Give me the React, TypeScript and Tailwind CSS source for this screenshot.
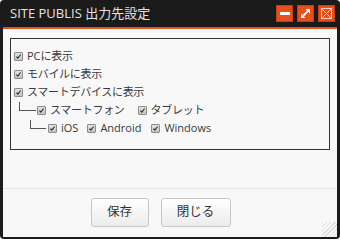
import { ReactNode } from 'react';

const font = { fontFamily: '"Open Sans", "Noto Sans CJK JP", sans-serif' };

const Check = () => (
  <span className="inline-flex h-[9px] w-[9px] shrink-0 items-center justify-center rounded-[1px] border border-[#8c8c8c] bg-gradient-to-b from-[#e4e4e4] to-[#c4c4c4]">
    <svg viewBox="0 0 9 9" className="h-[9px] w-[9px]">
      <path d="M1.8 4.6 L3.7 6.6 L7.2 1.9" fill="none" stroke="#2b2b2b" strokeWidth="1.4" />
    </svg>
  </span>
);

const Item = ({ children, className = '' }: { children: ReactNode; className?: string }) => (
  <span className={`flex items-center gap-[4px] ${className}`}>
    <Check />
    <span>{children}</span>
  </span>
);

const Latin = ({ children }: { children: string }) => <span className="text-[11px] tracking-[0px]">{children}</span>;

const Branch = ({ className }: { className: string }) => (
  <span className={`h-[9px] shrink-0 -translate-y-[4px] border-l border-b border-[#555] ${className}`} />
);

const TitleButton = ({ children }: { children: ReactNode }) => (
  <span className="flex h-[17px] w-[17px] items-center justify-center border border-[#c93c10] bg-[#e8501b]">{children}</span>
);

export default function App() {
  return (
    <div className="h-[239px] w-[340px] bg-white" style={font}>
      <div className="flex h-[239px] w-[340px] flex-col rounded-[4px] bg-[#1b1b1b] px-[3px] pb-[2px]">
        {/* title bar */}
        <div className="-mx-[3px] flex h-[27px] shrink-0 items-center pl-[10px] pr-[5px]">
          <span className="text-[13px] leading-none tracking-[0px] text-[#e2e2e2]">SITE PUBLIS 出力先設定</span>
          <div className="ml-auto flex gap-[4px]">
            <TitleButton>
              <span className="h-[3px] w-[10px] bg-white" />
            </TitleButton>
            <TitleButton>
              <svg viewBox="0 0 15 15" className="h-[15px] w-[15px]">
                <path d="M3.5 11.5 L11.5 3.5" stroke="#fff" strokeWidth="1.8" />
                <path d="M7.5 3 H12 V7.5 Z" fill="#fff" />
                <path d="M3 7.5 V12 H7.5 Z" fill="#fff" />
              </svg>
            </TitleButton>
            <TitleButton>
              <svg viewBox="0 0 15 15" className="h-[15px] w-[15px]">
                <rect x="2.5" y="2.5" width="10" height="10" fill="none" stroke="#fbd3c4" strokeWidth="1" />
                <path d="M3 3 L12 12 M12 3 L3 12" stroke="#fbd3c4" strokeWidth="1" />
              </svg>
            </TitleButton>
          </div>
        </div>

        {/* body */}
        <div className="relative flex flex-1 flex-col border-t-2 border-[#e8501b] bg-[#f8f8f8]">
          <div className="mx-[7px] mt-[9px] h-[112px] border border-[#333] pl-[3px] pt-[8px] text-[11px] leading-[18px] tracking-[-0.3px] text-[#3a3a3a]">
            <div className="flex h-[18px] items-center">
              <Item>
                <Latin>PC</Latin>に表示
              </Item>
            </div>
            <div className="flex h-[18px] items-center">
              <Item>モバイルに表示</Item>
            </div>
            <div className="flex h-[18px] items-center">
              <Item>スマートデバイスに表示</Item>
            </div>
            <div className="flex h-[18px] items-center">
              <Branch className="ml-[5px] mr-[1px] w-[17px]" />
              <Item className="mr-[13px]">スマートフォン</Item>
              <Item>タブレット</Item>
            </div>
            <div className="flex h-[18px] items-center">
              <Branch className="ml-[16px] mr-[2px] w-[16px]" />
              <Item className="mr-[9px]">
                <Latin>iOS</Latin>
              </Item>
              <Item className="mr-[10px]">
                <Latin>Android</Latin>
              </Item>
              <Item>
                <Latin>Windows</Latin>
              </Item>
            </div>
          </div>

          <div className="mt-auto flex h-[49px] items-start justify-center border-t border-[#e6e6e6] pr-[19px] pt-[9px]">
            <button className="mr-[12px] h-[29px] w-[58px] rounded-[3px] border border-[#c6c6c6] bg-gradient-to-b from-white to-[#ececec] text-[12.5px] text-[#333]">
              保存
            </button>
            <button className="h-[29px] w-[70px] rounded-[3px] border border-[#c6c6c6] bg-gradient-to-b from-white to-[#ececec] text-[12.5px] text-[#333]">
              閉じる
            </button>
          </div>

          <span className="absolute bottom-0 right-0 h-[15px] w-[15px] bg-[repeating-linear-gradient(135deg,#dcdcdc_0px,#dcdcdc_1px,transparent_1px,transparent_3px)]" />
        </div>
      </div>
    </div>
  );
}
